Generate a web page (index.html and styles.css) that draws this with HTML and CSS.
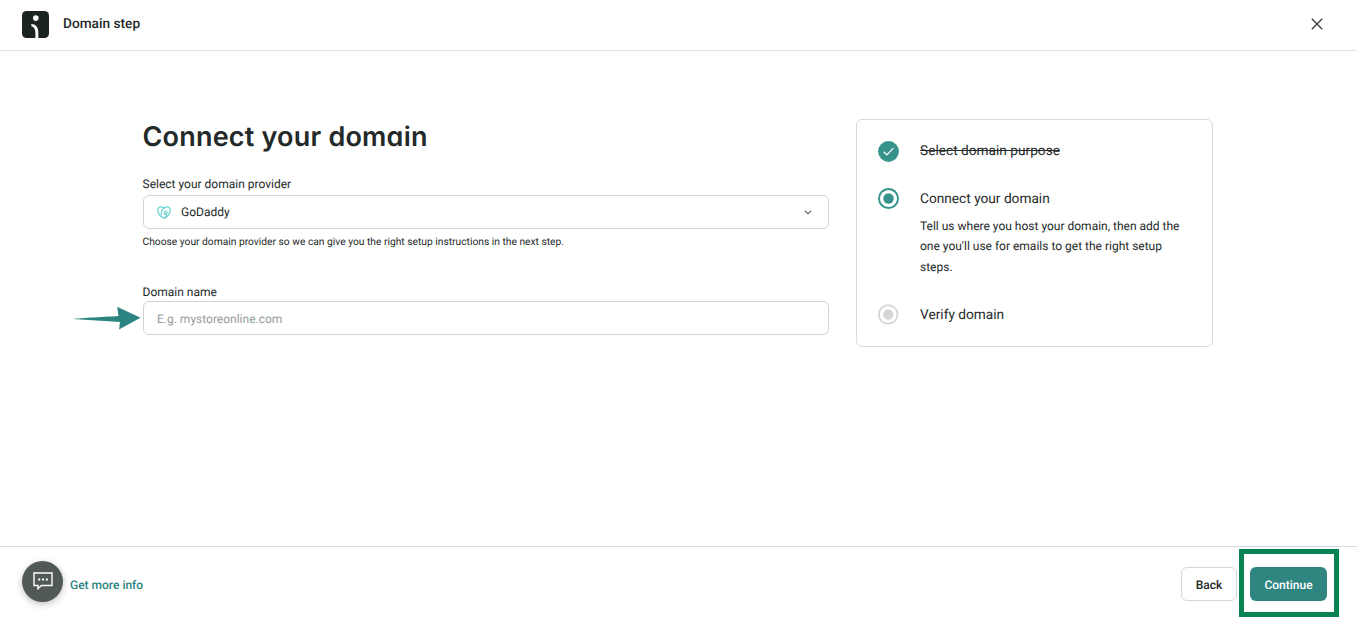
FILE: index.html
```html
<!DOCTYPE html>
<html lang="en">
<head>
<meta charset="utf-8">
<title>Domain step</title>
<link rel="stylesheet" href="styles.css">
</head>
<body>
<header class="header">
  <svg class="logo" viewBox="0 0 27 27"><rect width="27" height="27" rx="4.500" fill="#1c2422"/><circle cx="13.800" cy="7.100" r="2.800" fill="#fff"/><path d="M9.300 12.900C13.500 12.900 16.300 16 16.300 21v6h-2.900v-5.500c0-3.200-1.300-5.500-4-6.300z" fill="#fff"/></svg>
  <span class="header-title">Domain step</span>
  <svg class="close" viewBox="0 0 12 12"><path d="M.8.8l10.400 10.400M11.200.8L.8 11.200" stroke="#333938" stroke-width="1.300" fill="none"/></svg>
</header>
<main class="main">
  <section class="form">
    <h1 class="title">Connect your domain</h1>
    <div class="label">Select your domain provider</div>
    <div class="field">
      <svg class="provider" viewBox="0 0 14 13" fill="none" stroke="#6bd3d4" stroke-width="1.200"><path d="M7 2.100C4.900.2 1.800.4 1 2.800c-1.100 3.400 2 8.400 6 9.500 4-1.100 7.100-6.100 6-9.500C12.200.4 9.100.2 7 2.100"/><path d="M4.500 9.300C3.300 6.500 5 3 8.400 1.200M10.200 5.200C8.800 4.600 7.200 5.600 7 7.300c-.1 1.400 1.500 1.500 2.500.1L9.900 6.700H8.600M7 12.300c1.600-1 2.800-2.300 3.200-4"/></svg>
      <span class="value">GoDaddy</span>
      <svg class="chevron" viewBox="0 0 8 5"><path d="M1 .8l3 3 3-3" stroke="#4c5251" stroke-width="1.100" fill="none"/></svg>
    </div>
    <div class="hint">Choose your domain provider so we can give you the right setup instructions in the next step.</div>
    <div class="label label-name">Domain name</div>
    <div class="field field-name">
      <span class="placeholder">E.g. mystoreonline.com</span>
      <svg class="arrow" viewBox="0 0 68 24"><path d="M0 13.100C2 12.200 30 11 45.500 10L44.200.8 67.500 11.700 46 23.500 47 16z" fill="#2c8480"/></svg>
    </div>
  </section>
  <aside class="steps">
    <div class="step">
      <svg class="dot" viewBox="0 0 21 21"><circle cx="10.500" cy="10.500" r="10.400" fill="#35938b"/><path d="M5.700 10.700l3.200 3.100 6.400-6.600" stroke="#fff" stroke-width="1.200" fill="none"/></svg>
      <div class="step-title done">Select domain purpose</div>
    </div>
    <div class="step step-current">
      <svg class="dot" viewBox="0 0 21 21"><circle cx="10.500" cy="10.500" r="9.500" fill="none" stroke="#35938b" stroke-width="1.900"/><circle cx="10.500" cy="10.500" r="5.200" fill="#35938b"/></svg>
      <div>
        <div class="step-title current">Connect your domain</div>
        <p class="desc">Tell us where you host your domain, then add the<br>one you'll use for emails to get the right setup<br>steps.</p>
      </div>
    </div>
    <div class="step step-next">
      <svg class="dot" viewBox="0 0 21 21"><circle cx="10.200" cy="10.500" r="9.300" fill="none" stroke="#d5d7d6" stroke-width="1.900"/><circle cx="10.200" cy="10.500" r="5.200" fill="#d5d7d6"/></svg>
      <div class="step-title verify">Verify domain</div>
    </div>
  </aside>
</main>
<footer class="footer">
  <div class="chat"><svg class="chat-icon" viewBox="0 0 20 18"><path d="M1 1h18v12.500H8.500L5 16.700v-3.200H1z" fill="none" stroke="#fff" stroke-width="1.400"/><path d="M5.200 6.500h2v2h-2zM9 6.500h2v2H9zM12.800 6.500h2v2h-2z" fill="#fff"/></svg></div>
  <a class="info">Get more info</a>
  <div class="back"><span>Back</span></div>
  <div class="highlight"><div class="continue"><span>Continue</span></div></div>
</footer>
</body>
</html>
```
FILE: styles.css
```css
* { box-sizing: border-box; }
body { margin: 0; width: 1357px; height: 620px; display: flex; flex-direction: column; overflow: hidden; background: #fff; color: #242a29; font-family: Roboto, "Liberation Sans", sans-serif; text-rendering: geometricPrecision; }
svg { display: block; flex: none; }
.header { height: 51px; border-bottom: 1px solid #e2e3e3; display: flex; align-items: center; padding: 0 34px 2px 22px; }
.logo { width: 27px; height: 27px; }
.header-title { margin-left: 14px; font-size: 13.700px; font-weight: 500; }
.close { width: 12px; height: 12px; margin-left: auto; }
.main { flex: 1; display: flex; align-items: flex-start; padding: 68px 0 0 142.500px; }
.form { width: 686px; }
.title { margin: 0; height: 57px; font: 600 27px/36px Inter, sans-serif; font-feature-settings: "cv11"; letter-spacing: .2px; }
.label { height: 19px; line-height: 17px; font-size: 12px; }
.label-name { height: 17px; }
.field { height: 34px; border: 1px solid #d2d4d4; border-radius: 6px; display: flex; align-items: center; position: relative; padding: 0 16px 0 13.500px; }
.field-name { padding-top: 1px; }
.provider { width: 14px; height: 13px; }
.value { margin-left: 10px; font-size: 12px; }
.chevron { width: 8px; height: 5px; margin-left: auto; }
.hint { height: 55px; padding-top: 5px; line-height: 15px; font-size: 10.250px; }
.placeholder { font-size: 12px; color: #969c9b; }
.arrow { position: absolute; width: 68px; height: 24px; left: -70.500px; top: 4px; }
.steps { width: 357px; height: 228px; margin-left: 27.500px; border: 1px solid #d8dada; border-radius: 6px; padding: 20.500px 0 0 21px; }
.step { display: flex; gap: 21px; }
.dot { width: 21px; height: 21px; }
.step-title { font-size: 13.700px; line-height: 20px; }
.done { text-decoration: line-through; }
.step-current { margin-top: 26.500px; }
.current, .verify { padding-top: 1px; }
.desc { margin: 7px 0 0; font-size: 12px; line-height: 20.300px; }
.step-next { margin-top: 27.500px; }
.footer { height: 74px; border-top: 1px solid #d9dadb; display: flex; align-items: flex-start; padding: 0 18px 0 22px; }
.chat { width: 41px; height: 41px; margin-top: 13.500px; border-radius: 50%; background: #515957; box-shadow: 0 2px 7px rgba(0,0,0,.25); display: flex; align-items: center; justify-content: center; }
.chat-icon { width: 20px; height: 18px; }
.info { margin: 29.500px auto 0 7px; font-size: 12px; line-height: 16px; font-weight: 500; color: #2c8480; }
.back { width: 56px; height: 34px; margin-top: 20px; border: 1px solid #d4d6d6; border-radius: 6px; display: flex; align-items: center; justify-content: center; font-size: 12px; font-weight: 500; padding-top: 1px; }
.highlight { width: 100px; height: 68px; margin: 2px 0 0 2px; border: 5px solid #078354; display: flex; padding: 13px 0 0 6px; }
.continue { width: 77px; height: 34px; border-radius: 6px; background: #2f8580; color: #fff; font-size: 12px; font-weight: 500; display: flex; align-items: center; justify-content: center; padding-top: 1px; }
```
